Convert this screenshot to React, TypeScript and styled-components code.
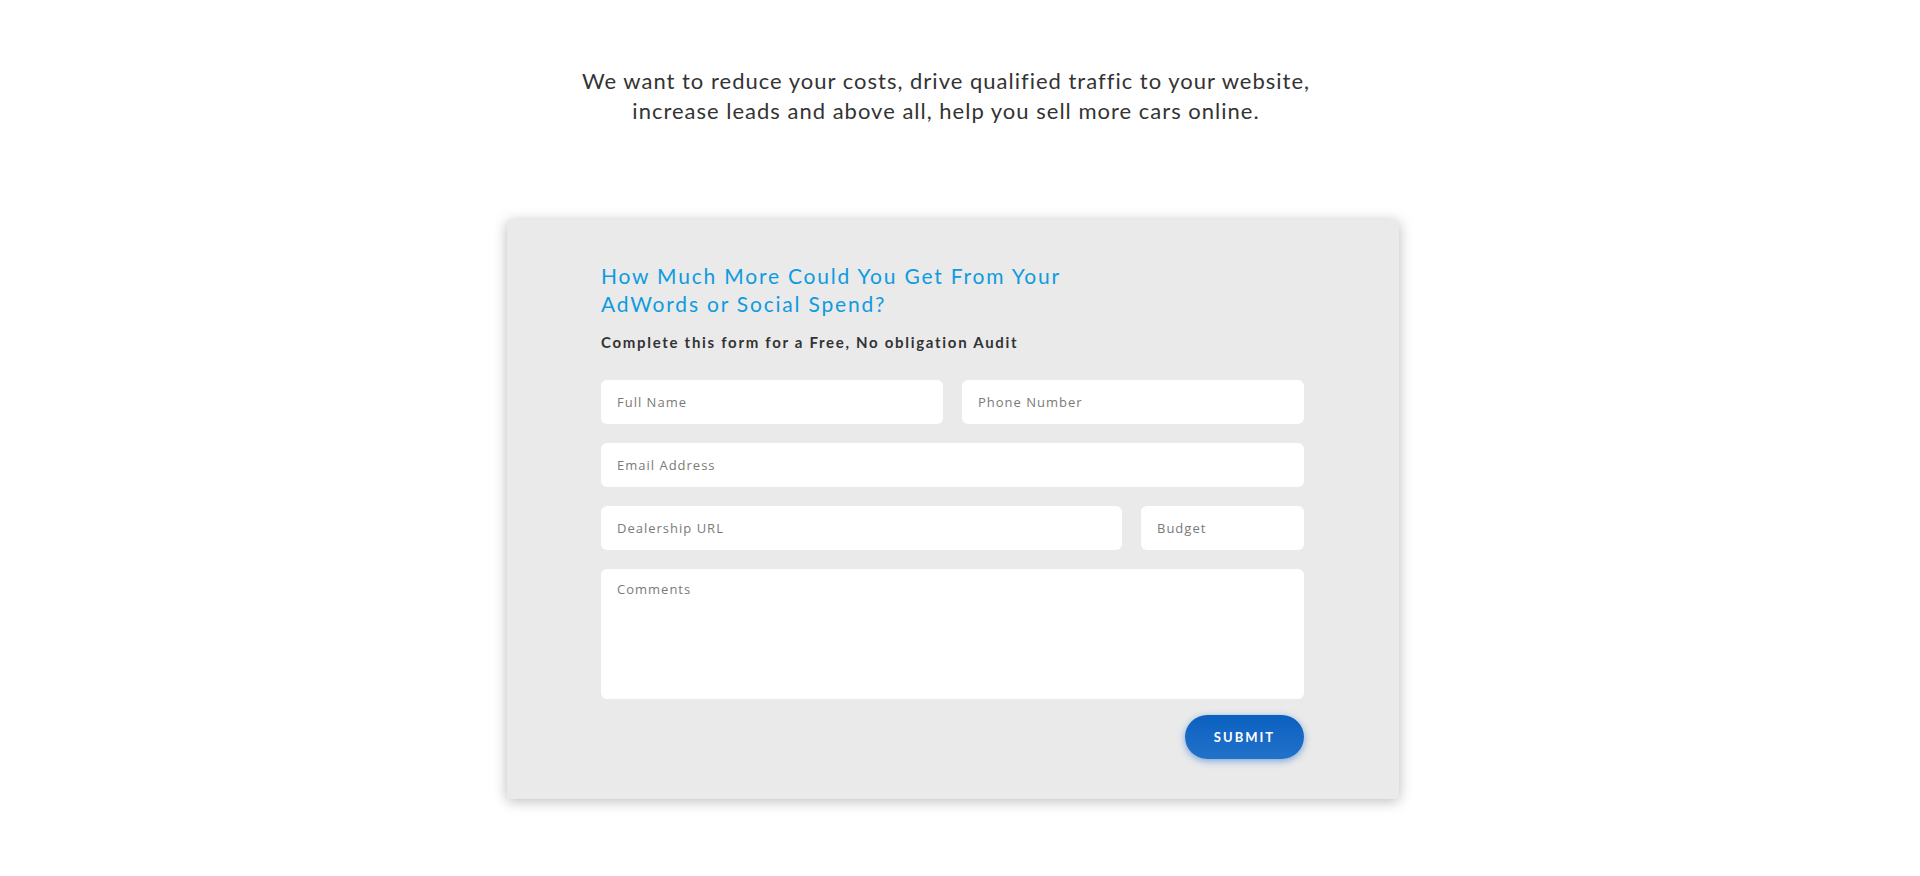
import React from 'react'
import styled, { createGlobalStyle } from 'styled-components'

const GlobalStyle = createGlobalStyle`
  html, body {
    margin: 0;
    padding: 0;
    background: #ffffff;
  }
  * {
    box-sizing: border-box;
  }
`

const Page = styled.main`
  width: 1920px;
  min-height: 876px;
  display: flex;
  flex-direction: column;
  align-items: center;
  padding: 66px 0 60px;
  font-family: 'Lato', 'Liberation Sans', sans-serif;
`

const Intro = styled.p`
  margin: 0 28px 0 0;
  font-size: 22px;
  line-height: 30px;
  letter-spacing: 1px;
  color: #333333;
  text-align: center;
`

const Card = styled.section`
  width: 892px;
  margin: 94px 14px 0 0;
  padding: 42px 95px 40px 94px;
  background: #eaeaea;
  border-radius: 3px;
  box-shadow: 0 2px 14px rgba(0, 0, 0, 0.28);
`

const Heading = styled.h2`
  margin: 0;
  max-width: 500px;
  font-size: 21px;
  line-height: 28px;
  font-weight: 400;
  letter-spacing: 1.8px;
  color: #0f9be0;
`

const Lead = styled.p`
  margin: 14px 0 0;
  font-size: 15px;
  line-height: 20px;
  font-weight: 700;
  letter-spacing: 1.7px;
  color: #333333;
`

const Form = styled.form`
  display: flex;
  flex-direction: column;
  gap: 19px;
  margin-top: 28px;
`

const Row = styled.div<{ $cols: string }>`
  display: grid;
  grid-template-columns: ${(p) => p.$cols};
  gap: 19px;
`

const fieldStyles = `
  width: 100%;
  border: none;
  outline: none;
  background: #ffffff;
  border-radius: 6px;
  font-family: 'Open Sans', 'Liberation Sans', sans-serif;
  font-size: 13px;
  letter-spacing: 1px;
  color: #444444;
  &::placeholder {
    color: #7a7a7a;
    opacity: 1;
  }
`

const Input = styled.input`
  ${fieldStyles}
  height: 44px;
  padding: 0 16px;
`

const TextArea = styled.textarea`
  ${fieldStyles}
  height: 130px;
  padding: 11px 16px;
  resize: none;
  line-height: 18px;
  display: block;
`

const Actions = styled.div`
  display: flex;
  justify-content: flex-end;
  margin-top: -3px;
`

const SubmitButton = styled.button`
  width: 119px;
  height: 44px;
  border: none;
  border-radius: 22px;
  background: linear-gradient(180deg, #0b60c0 0%, #2272c9 100%);
  box-shadow: 0 2px 7px rgba(30, 110, 210, 0.55);
  color: #ffffff;
  font-family: 'Lato', 'Liberation Sans', sans-serif;
  font-size: 13px;
  font-weight: 700;
  letter-spacing: 2px;
  cursor: pointer;
`

export default function App() {
  return (
    <>
      <GlobalStyle />
      <Page>
        <Intro>
          We want to reduce your costs, drive qualified traffic to your website,
          <br />
          increase leads and above all, help you sell more cars online.
        </Intro>
        <Card>
          <Heading>How Much More Could You Get From Your AdWords or Social Spend?</Heading>
          <Lead>Complete this form for a Free, No obligation Audit</Lead>
          <Form onSubmit={(e) => e.preventDefault()}>
            <Row $cols="1fr 1fr">
              <Input placeholder="Full Name" />
              <Input placeholder="Phone Number" />
            </Row>
            <Input placeholder="Email Address" />
            <Row $cols="1fr 163px">
              <Input placeholder="Dealership URL" />
              <Input placeholder="Budget" />
            </Row>
            <TextArea placeholder="Comments" />
            <Actions>
              <SubmitButton type="submit">SUBMIT</SubmitButton>
            </Actions>
          </Form>
        </Card>
      </Page>
    </>
  )
}
